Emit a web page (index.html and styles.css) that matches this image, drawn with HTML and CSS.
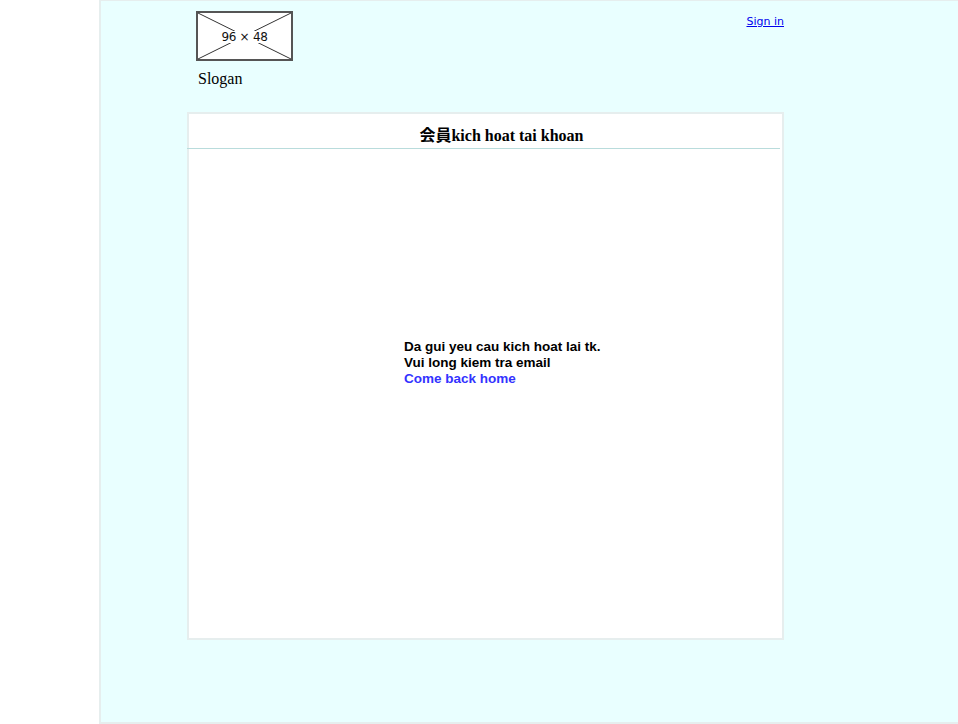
FILE: index.html
```html
<!DOCTYPE html>
<html>
<head>
<meta charset="utf-8">
<link rel="stylesheet" href="styles.css">
</head>
<body>
<div class="frame">
  <div class="wrap">
    <div class="top">
      <div class="brand">
        <div class="logo">
          <svg class="logo-x" width="97" height="50" viewBox="0 0 97 50">
            <line x1="2" y1="2" x2="95" y2="48" stroke="#333" stroke-width="1"/>
            <line x1="95" y1="2" x2="2" y2="48" stroke="#333" stroke-width="1"/>
          </svg>
          <span class="logo-text">96 × 48</span>
        </div>
        <div class="slogan">Slogan</div>
      </div>
      <a class="signin" href="#">Sign in</a>
    </div>
    <div class="card">
      <div class="card-head">会員kich hoat tai khoan</div>
      <div class="card-body">
        <div class="msg">
          <div>Da gui yeu cau kich hoat lai tk.</div>
          <div>Vui long kiem tra email</div>
          <a class="home" href="#">Come back home</a>
        </div>
      </div>
    </div>
  </div>
</div>
</body>
</html>
```
FILE: styles.css
```css
html, body {
  margin: 0;
  padding: 0;
  background: #ffffff;
}
body {
  font-family: "Liberation Serif", "Noto Sans CJK JP", serif;
  overflow: hidden;
}
.frame {
  margin-left: 99px;
  height: 721px;
  border: 2px solid #e6eeee;
  border-top-width: 1px;
  border-right: none;
  background: #e9ffff;
}
.wrap {
  width: 597px;
  margin-left: 86px;
}
.top {
  display: flex;
  justify-content: space-between;
  align-items: flex-start;
  height: 111px;
}
.brand {
  padding-top: 10px;
  padding-left: 9px;
}
.logo {
  position: relative;
  width: 93px;
  height: 46px;
  border: 2px solid #555;
  background: #ffffff;
  display: flex;
  align-items: center;
  justify-content: center;
}
.logo-x {
  position: absolute;
  left: -2px;
  top: -2px;
}
.logo-text {
  position: relative;
  font-family: "DejaVu Sans", "Liberation Sans", sans-serif;
  font-size: 12px;
  line-height: 12px;
  color: #111;
  letter-spacing: -0.3px;
  background: #ffffff;
  padding: 0;
  margin-top: 2px;
}
.slogan {
  margin-top: 9px;
  margin-left: 2px;
  font-size: 16px;
  line-height: 18px;
  color: #000;
}
.signin {
  margin-top: 14px;
  font-family: "DejaVu Sans", "Liberation Sans", sans-serif;
  font-size: 11px;
  color: #0000ee;
  text-decoration: underline;
}
.card {
  height: 524px;
  border: 2px solid #e6eeee;
  background: #ffffff;
}
.card-head {
  margin-left: -2px;
  margin-right: 2px;
  border-bottom: 1px solid #b9dcdc;
  text-align: center;
  font-weight: bold;
  font-size: 16px;
  line-height: 18px;
  padding-top: 13px;
  box-sizing: border-box;
  height: 35px;
  padding-left: 36px;
}
.card-body {
  padding-top: 190px;
  padding-left: 215px;
}
.msg {
  font-family: "Liberation Sans", Arial, sans-serif;
  font-weight: bold;
  font-size: 13.5px;
  line-height: 16px;
  color: #000;
}
.home {
  color: #3333ff;
  text-decoration: none;
}
```
